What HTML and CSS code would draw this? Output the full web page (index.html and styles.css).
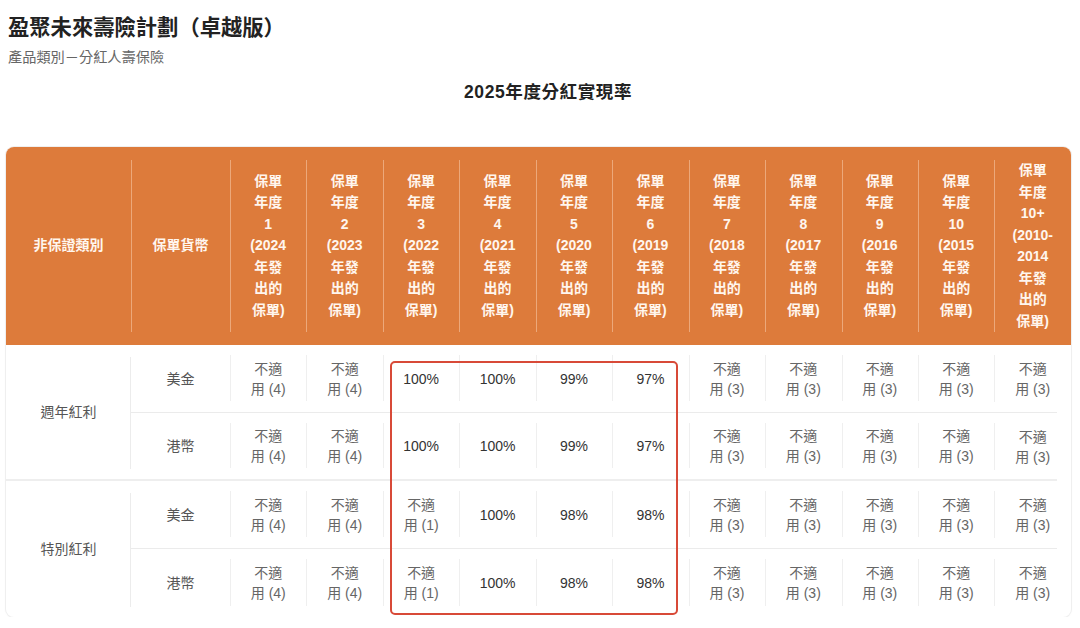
FILE: index.html
```html
<!DOCTYPE html>
<html lang="zh-Hant">
<head>
<meta charset="utf-8">
<link rel="stylesheet" href="styles.css">
</head>
<body>
<div class="page">
  <h1 class="title">盈聚未來壽險計劃（卓越版）</h1>
  <p class="subtitle">產品類別－分紅人壽保險</p>
  <h2 class="table-title">2025年度分紅實現率</h2>
  <div class="card">
    <table class="rates">
      <colgroup>
        <col class="c-grp"><col class="c-cur">
        <col class="c-yr"><col class="c-yr"><col class="c-yr"><col class="c-yr"><col class="c-yr"><col class="c-yr"><col class="c-yr"><col class="c-yr"><col class="c-yr"><col class="c-yr"><col class="c-yr">
      </colgroup>
      <thead>
        <tr>
          <th class="h-first">非保證類別</th>
          <th>保單貨幣</th>
          <th>保單<br>年度<br>1<br>(2024<br>年發<br>出的<br>保單)</th>
          <th>保單<br>年度<br>2<br>(2023<br>年發<br>出的<br>保單)</th>
          <th>保單<br>年度<br>3<br>(2022<br>年發<br>出的<br>保單)</th>
          <th>保單<br>年度<br>4<br>(2021<br>年發<br>出的<br>保單)</th>
          <th>保單<br>年度<br>5<br>(2020<br>年發<br>出的<br>保單)</th>
          <th>保單<br>年度<br>6<br>(2019<br>年發<br>出的<br>保單)</th>
          <th>保單<br>年度<br>7<br>(2018<br>年發<br>出的<br>保單)</th>
          <th>保單<br>年度<br>8<br>(2017<br>年發<br>出的<br>保單)</th>
          <th>保單<br>年度<br>9<br>(2016<br>年發<br>出的<br>保單)</th>
          <th>保單<br>年度<br>10<br>(2015<br>年發<br>出的<br>保單)</th>
          <th class="h-last">保單<br>年度<br>10+<br>(2010-<br>2014<br>年發<br>出的<br>保單)</th>
        </tr>
      </thead>
      <tbody>
        <tr class="row-top">
          <td class="grp" rowspan="2">週年紅利</td>
          <td class="cur">美金</td>
          <td class="na">不適<br>用 (4)</td>
          <td class="na">不適<br>用 (4)</td>
          <td class="pct">100%</td>
          <td class="pct">100%</td>
          <td class="pct">99%</td>
          <td class="pct">97%</td>
          <td class="na">不適<br>用 (3)</td>
          <td class="na">不適<br>用 (3)</td>
          <td class="na">不適<br>用 (3)</td>
          <td class="na">不適<br>用 (3)</td>
          <td class="na last">不適<br>用 (3)</td>
        </tr>
        <tr class="row-end">
          <td class="cur">港幣</td>
          <td class="na">不適<br>用 (4)</td>
          <td class="na">不適<br>用 (4)</td>
          <td class="pct">100%</td>
          <td class="pct">100%</td>
          <td class="pct">99%</td>
          <td class="pct">97%</td>
          <td class="na">不適<br>用 (3)</td>
          <td class="na">不適<br>用 (3)</td>
          <td class="na">不適<br>用 (3)</td>
          <td class="na">不適<br>用 (3)</td>
          <td class="na last">不適<br>用 (3)</td>
        </tr>
        <tr class="row-top">
          <td class="grp" rowspan="2">特別紅利</td>
          <td class="cur">美金</td>
          <td class="na">不適<br>用 (4)</td>
          <td class="na">不適<br>用 (4)</td>
          <td class="na">不適<br>用 (1)</td>
          <td class="pct">100%</td>
          <td class="pct">98%</td>
          <td class="pct">98%</td>
          <td class="na">不適<br>用 (3)</td>
          <td class="na">不適<br>用 (3)</td>
          <td class="na">不適<br>用 (3)</td>
          <td class="na">不適<br>用 (3)</td>
          <td class="na last">不適<br>用 (3)</td>
        </tr>
        <tr class="row-final">
          <td class="cur">港幣</td>
          <td class="na">不適<br>用 (4)</td>
          <td class="na">不適<br>用 (4)</td>
          <td class="na">不適<br>用 (1)</td>
          <td class="pct">100%</td>
          <td class="pct">98%</td>
          <td class="pct">98%</td>
          <td class="na">不適<br>用 (3)</td>
          <td class="na">不適<br>用 (3)</td>
          <td class="na">不適<br>用 (3)</td>
          <td class="na">不適<br>用 (3)</td>
          <td class="na last">不適<br>用 (3)</td>
        </tr>
      </tbody>
    </table>
    <div class="highlight"></div>
  </div>
</div>
</body>
</html>
```

FILE: styles.css
```css
* { box-sizing: border-box; }

html, body {
  margin: 0;
  padding: 0;
  background: #ffffff;
}

body {
  font-family: "Liberation Sans", "Noto Sans CJK TC", "Noto Sans CJK SC", sans-serif;
  color: #333;
}

.page {
  width: 1080px;
  padding: 14px 0 0 6px;
}

.title {
  margin: 0 0 0 2px;
  font-size: 21.3px;
  line-height: 28px;
  font-weight: 700;
  color: #222;
}

.subtitle {
  margin: 5px 0 0 2px;
  font-size: 14.2px;
  line-height: 20px;
  color: #666;
}

.table-title {
  margin: 13px 0 0 10px;
  font-size: 17.5px;
  line-height: 24px;
  letter-spacing: 0.6px;
  font-weight: 700;
  color: #222;
  text-align: center;
}

.card {
  position: relative;
  width: 1065px;
  margin-top: 43px;
  background: #fff;
  border-radius: 8px;
  box-shadow: 0 0 0 1px #efefef, 0 1px 3px rgba(0, 0, 0, 0.04);
}

.rates {
  width: 1065px;
  table-layout: fixed;
  border-collapse: separate;
  border-spacing: 0;
}

.c-grp { width: 125px; }
.c-cur { width: 99px; }
.c-yr { width: 76.45px; }

.rates th {
  position: relative;
  background: #dd7b3b;
  color: #fff6ee;
  font-size: 14px;
  line-height: 21.5px;
  font-weight: 700;
  text-align: center;
  vertical-align: middle;
  padding: 13px 2px;
}

.rates th.h-first { border-top-left-radius: 8px; }
.rates th.h-last { border-top-right-radius: 8px; }

.rates th + th::before {
  content: "";
  position: absolute;
  left: 0;
  top: 13px;
  bottom: 13px;
  width: 1px;
  background: rgba(255, 225, 200, 0.45);
}

.rates td {
  position: relative;
  height: 68px;
  padding: 0 2px;
  font-size: 14px;
  line-height: 20px;
  text-align: center;
  vertical-align: middle;
  border-bottom: 1px solid #ebebeb;
}

.rates td.last { border-bottom: none; }
.rates td.last::after {
  content: "";
  position: absolute;
  left: 0;
  right: 14px;
  bottom: 0;
  height: 1px;
  background: #ebebeb;
}

.rates tr.row-end td { border-bottom: 2px solid #eeeeee; }
.rates tr.row-end td.last { border-bottom: none; }
.rates tr.row-end td.last::after { height: 2px; background: #eeeeee; }

.rates tr.row-final td { border-bottom: none; }
.rates tr.row-final td.last::after { display: none; }

.rates td.grp {
  color: #555;
  border-bottom: 2px solid #eeeeee;
}
.rates tr.row-top:nth-child(3) td.grp { border-bottom: none; }

.rates td.grp::before {
  content: "";
  position: absolute;
  right: 0;
  top: 12px;
  bottom: 10px;
  width: 1px;
  background: #ececec;
}

.rates td.cur { color: #555; }

.rates td.na { color: #666; }
.rates td.pct { color: #333; }

.rates td.na::before,
.rates td.pct::before {
  content: "";
  position: absolute;
  left: 0;
  top: 10px;
  bottom: 11px;
  width: 1px;
  background: #efefef;
}

.highlight {
  position: absolute;
  left: 384px;
  top: 214px;
  width: 288px;
  height: 254px;
  border: 2.5px solid #d84a38;
  border-radius: 5px;
  pointer-events: none;
}
```
